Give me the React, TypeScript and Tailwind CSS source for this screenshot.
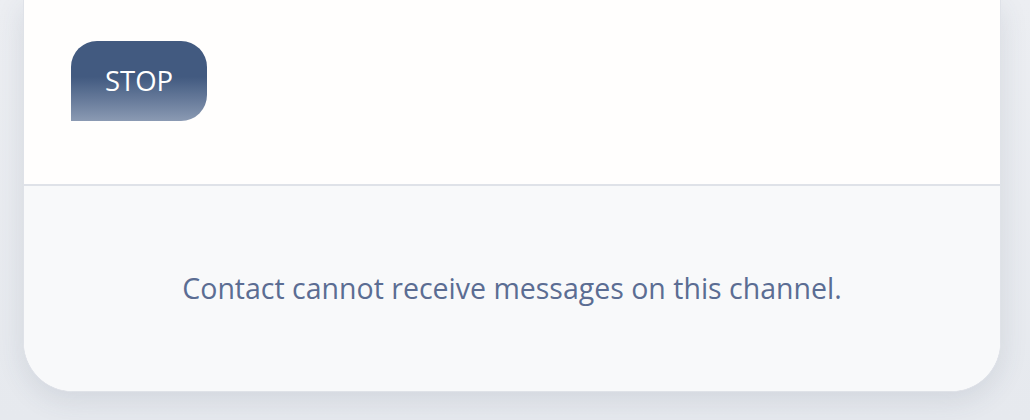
const App = () => {
    return (
        <div className="w-[1030px] h-[420px] overflow-hidden bg-gradient-to-b from-[#eceef2] to-[#e6e9ee] font-['Open_Sans',sans-serif]">
            <div className="ml-[23px] w-[978px] h-[392px] bg-white border-x border-b border-[#dfe2e8] rounded-b-[50px] overflow-hidden shadow-[0_8px_28px_rgba(60,72,100,0.12)] flex flex-col">
                <div className="h-[186px] bg-[#fffefd] px-[47px] pt-[41px] border-b-2 border-[#dfe2e8]">
                    <button className="w-[136px] h-[80px] rounded-t-[26px] rounded-br-[26px] bg-gradient-to-b from-[#425a80] from-45% to-[#8b9ab3] text-white text-[27.5px] flex items-center justify-center">
                        STOP
                    </button>
                </div>
                <div className="flex-1 bg-[#f8f9fa] flex items-center justify-center">
                    <p className="text-[28.5px] text-[#5b6d93]">Contact cannot receive messages on this channel.</p>
                </div>
            </div>
        </div>
    );
};

export default App;
